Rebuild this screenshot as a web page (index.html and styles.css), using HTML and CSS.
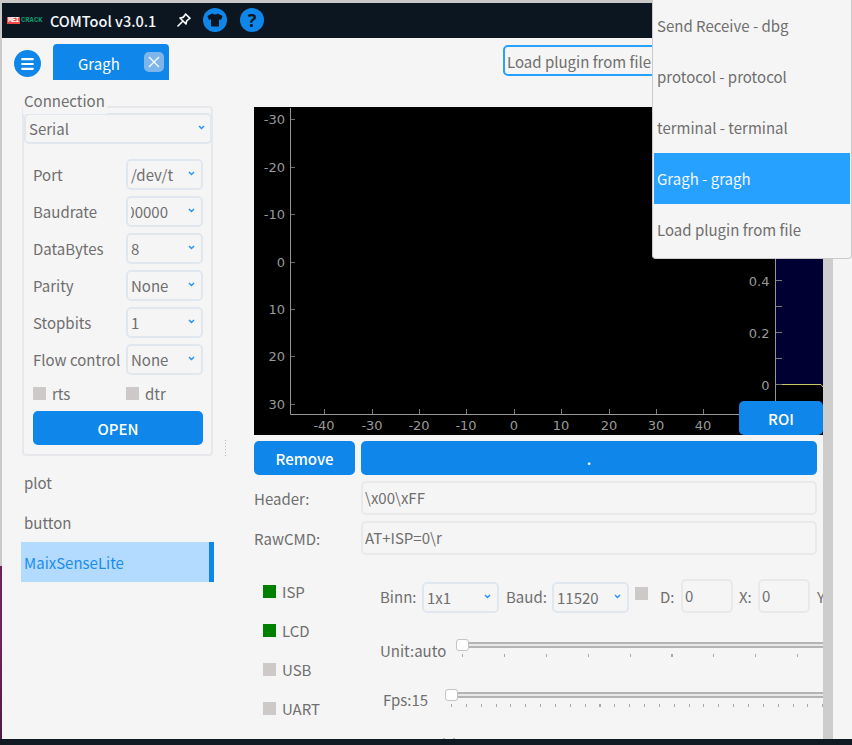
FILE: index.html
```html
<!DOCTYPE html>
<html lang="en">
<head>
<meta charset="utf-8">
<title>COMTool v3.0.1</title>
<link rel="stylesheet" href="styles.css">
</head>
<body>
<div class="desk">
  <div class="window">
    <header class="titlebar">
      <div class="logo"><span class="logo-red">MEI</span><span class="logo-green">CRACK</span></div>
      <div class="app-title">COMTool v3.0.1</div>
      <svg class="pin" width="14" height="14" viewBox="0 0 14 14"><path d="M8.6 1 L13 5.4 L11.4 6.4 L9.6 8 L9 11 L3 5 L6 4.4 L7.6 2.6 Z M5 9 L1 13" fill="none" stroke="#fff" stroke-width="1.6" stroke-linejoin="round" stroke-linecap="round"/></svg>
      <div class="round-icon shirt"><svg width="16" height="14" viewBox="0 0 16 14"><path d="M5.2 0.5 Q8 2.6 10.8 0.5 L15.6 3 L14 7 L12 6.2 L12 13.5 L4 13.5 L4 6.2 L2 7 L0.4 3 Z" fill="#0b1621"/></svg></div>
      <div class="round-icon help">?</div>
    </header>
    <div class="tabbar">
      <div class="menu-btn"><svg width="13" height="12" viewBox="0 0 13 12"><path d="M1.2 1.2H11.8M1.2 6H11.8M1.2 10.8H11.8" stroke="#fff" stroke-width="2.2" stroke-linecap="round"/></svg></div>
      <div class="tab">
        <span>Gragh</span>
        <div class="tab-close"><svg width="12" height="12" viewBox="0 0 12 12"><path d="M1 1L11 11M11 1L1 11" stroke="#fff" stroke-width="1.1"/></svg></div>
      </div>
      <div class="plugin-combo">Load plugin from file</div>
    </div>
    <div class="content">
      <aside class="sidebar">
        <section class="group">
          <div class="group-title">Connection</div>
          <div class="select select-wide"><span class="val">Serial</span><svg class="chev" width="7" height="5" viewBox="0 0 7 5"><path d="M1 1L3.5 3.5L6 1" fill="none" stroke="#1e90ff" stroke-width="1.4"/></svg></div>
          <div class="conn-form">
            <div class="conn-row"><span class="conn-label">Port</span><div class="select"><span class="val">/dev/t</span><svg class="chev" width="7" height="5" viewBox="0 0 7 5"><path d="M1 1L3.5 3.5L6 1" fill="none" stroke="#1e90ff" stroke-width="1.4"/></svg></div></div>
            <div class="conn-row"><span class="conn-label">Baudrate</span><div class="select"><span class="val val-end"><span>1000000</span></span><svg class="chev" width="7" height="5" viewBox="0 0 7 5"><path d="M1 1L3.5 3.5L6 1" fill="none" stroke="#1e90ff" stroke-width="1.4"/></svg></div></div>
            <div class="conn-row"><span class="conn-label">DataBytes</span><div class="select"><span class="val">8</span><svg class="chev" width="7" height="5" viewBox="0 0 7 5"><path d="M1 1L3.5 3.5L6 1" fill="none" stroke="#1e90ff" stroke-width="1.4"/></svg></div></div>
            <div class="conn-row"><span class="conn-label">Parity</span><div class="select"><span class="val">None</span><svg class="chev" width="7" height="5" viewBox="0 0 7 5"><path d="M1 1L3.5 3.5L6 1" fill="none" stroke="#1e90ff" stroke-width="1.4"/></svg></div></div>
            <div class="conn-row"><span class="conn-label">Stopbits</span><div class="select"><span class="val">1</span><svg class="chev" width="7" height="5" viewBox="0 0 7 5"><path d="M1 1L3.5 3.5L6 1" fill="none" stroke="#1e90ff" stroke-width="1.4"/></svg></div></div>
            <div class="conn-row"><span class="conn-label">Flow control</span><div class="select"><span class="val">None</span><svg class="chev" width="7" height="5" viewBox="0 0 7 5"><path d="M1 1L3.5 3.5L6 1" fill="none" stroke="#1e90ff" stroke-width="1.4"/></svg></div></div>
            <div class="check-row">
              <div class="check-item"><i class="box"></i><span>rts</span></div>
              <div class="check-item"><i class="box"></i><span>dtr</span></div>
            </div>
            <div class="btn btn-open">OPEN</div>
          </div>
        </section>
        <nav class="plugin-list">
          <div class="plugin-item">plot</div>
          <div class="plugin-item">button</div>
          <div class="plugin-item active">MaixSenseLite</div>
        </nav>
      </aside>
      <main class="main">
        <div class="chart">
          <svg class="chart-svg" width="569" height="328" viewBox="254 107 569 328">
            <rect x="254" y="107" width="569" height="328" fill="#000"/>
            <rect x="776" y="107" width="47" height="277" fill="#000033"/>
            <path d="M776 384.5H821L823 387" fill="none" stroke="#c8c864" stroke-width="1"/>
            <g stroke="#969696" stroke-width="1" fill="none">
              <path d="M290.5 108V414.5H739"/>
              <path d="M775.5 107V401"/>
              <path stroke="#6a6a6a" d="M291 119.5h4M291 167.5h4M291 214.5h4M291 262.5h4M291 309.5h4M291 356.5h4M291 404.5h4"/>
              <path stroke="#7a7a7a" d="M324.5 409v5M372.5 409v5M419.5 409v5M466.5 409v5M514.5 409v5M561.5 409v5M609.5 409v5M656.5 409v5M703.5 409v5"/>
              <path stroke="#7a7a7a" d="M776 280.5h6M776 306.5h6M776 332.5h6M776 358.5h6M776 384.5h6"/>
            </g>
            <g class="axis-text" text-anchor="end">
              <text x="285" y="124">-30</text><text x="285" y="172">-20</text><text x="285" y="219">-10</text><text x="285" y="267">0</text><text x="285" y="314">10</text><text x="285" y="361">20</text><text x="285" y="409">30</text>
              <text x="769.5" y="286">0.4</text><text x="769.5" y="338">0.2</text><text x="769.5" y="390">0</text>
            </g>
            <g class="axis-text" text-anchor="middle">
              <text x="324" y="430">-40</text><text x="372" y="430">-30</text><text x="419" y="430">-20</text><text x="466" y="430">-10</text><text x="514" y="430">0</text><text x="561" y="430">10</text><text x="609" y="430">20</text><text x="656" y="430">30</text><text x="703" y="430">40</text>
            </g>
          </svg>
          <div class="btn btn-roi">ROI</div>
        </div>
        <div class="action-row">
          <div class="btn btn-remove">Remove</div>
          <div class="btn btn-dot">.</div>
        </div>
        <div class="field-row"><span class="field-label">Header:</span><div class="input input-wide">\x00\xFF</div></div>
        <div class="field-row"><span class="field-label">RawCMD:</span><div class="input input-wide">AT+ISP=0\r</div></div>
        <div class="panel">
          <div class="status">
            <div class="status-row"><i class="box on"></i><span>ISP</span></div>
            <div class="status-row"><i class="box on"></i><span>LCD</span></div>
            <div class="status-row"><i class="box"></i><span>USB</span></div>
            <div class="status-row"><i class="box"></i><span>UART</span></div>
          </div>
          <div class="controls">
            <div class="ctrl-row">
              <span class="lbl lbl-binn">Binn:</span>
              <div class="select"><span class="val">1x1</span><svg class="chev" width="7" height="5" viewBox="0 0 7 5"><path d="M1 1L3.5 3.5L6 1" fill="none" stroke="#1e90ff" stroke-width="1.4"/></svg></div>
              <span class="lbl lbl-baud">Baud:</span>
              <div class="select"><span class="val">11520</span><svg class="chev" width="7" height="5" viewBox="0 0 7 5"><path d="M1 1L3.5 3.5L6 1" fill="none" stroke="#1e90ff" stroke-width="1.4"/></svg></div>
              <i class="box box-baud"></i>
              <span class="lbl lbl-d">D:</span>
              <div class="input input-small">0</div>
              <span class="lbl lbl-x">X:</span>
              <div class="input input-small">0</div>
              <span class="lbl lbl-y">Y:</span>
            </div>
            <div class="slider-row">
              <span class="slider-label">Unit:auto</span>
              <div class="slider"><i class="track"></i><i class="ticks ticks-unit"></i><i class="handle"></i></div>
            </div>
            <div class="slider-row">
              <span class="slider-label slider-label-fps">Fps:15</span>
              <div class="slider"><i class="track"></i><i class="ticks ticks-fps"></i><i class="handle"></i></div>
            </div>
          </div>
        </div>
      </main>
      <div class="scrollbar"></div>
      <i class="split-dots split-v"></i>
      <i class="split-dots split-h"></i>
    </div>
  </div>
  <footer class="taskbar"></footer>
</div>
<div class="popup">
  <div class="popup-item">Send Receive - dbg</div>
  <div class="popup-item">protocol - protocol</div>
  <div class="popup-item">terminal - terminal</div>
  <div class="popup-item selected">Gragh - gragh</div>
  <div class="popup-item">Load plugin from file</div>
</div>
</body>
</html>
```
FILE: styles.css
```css
* { box-sizing: border-box; }
html, body { margin: 0; padding: 0; }
body {
  position: relative;
  width: 852px;
  height: 745px;
  overflow: hidden;
  font-family: "Noto Sans CJK SC", "Noto Sans", sans-serif;
  font-size: 15px;
  color: #6f6f6f;
  background: #f5f5f5;
}
.desk {
  display: flex;
  flex-direction: column;
  height: 745px;
  padding: 3px 0 0 2px;
  background: linear-gradient(#c9c9c9 0, #c9c9c9 566px, #6e2358 566px, #702358 640px, #4e1c44 739px);
}
.window {
  flex: 1;
  min-height: 0;
  display: flex;
  flex-direction: column;
  background: #f5f5f5;
}
.taskbar { height: 6px; margin-left: -2px; background: #111a22; }

/* title bar */
.titlebar {
  height: 35px;
  display: flex;
  align-items: center;
  padding-left: 5px;
  background: #0b1621;
}
.logo {
  display: flex;
  align-items: center;
  width: 43px;
  height: 7px;
  font-family: "Liberation Mono", monospace;
  font-size: 7px;
  font-weight: 700;
  line-height: 7px;
}
.logo-red { width: 13px; background: #f0484a; color: #fff; text-align: center; letter-spacing: -0.5px; }
.logo-green { margin-left: 1px; color: #119a6b; letter-spacing: 0.1px; }
.app-title { width: 127px; color: #f4f7fa; font-size: 14.5px; font-weight: 500; line-height: 35px; white-space: nowrap; }
.pin { margin-right: 12px; margin-top: -1px; }
.round-icon {
  width: 24px;
  height: 24px;
  border-radius: 50%;
  background: #0f87ea;
  display: flex;
  align-items: center;
  justify-content: center;
  margin-top: -1px;
}
.help {
  margin-left: 13px;
  color: #0b1621;
  font-family: "Noto Sans", sans-serif;
  font-size: 18px;
  font-weight: 700;
  line-height: 24px;
}

/* tab bar */
.tabbar { height: 42px; display: flex; align-items: flex-start; padding: 6px 0 0 12px; }
.menu-btn {
  width: 27px;
  height: 27px;
  margin-top: 6px;
  border-radius: 50%;
  background: #0f87ea;
  display: flex;
  align-items: center;
  justify-content: center;
}
.tab {
  position: relative;
  width: 116px;
  height: 36px;
  margin-left: 12px;
  padding-left: 25px;
  border-radius: 4px 4px 0 0;
  background: #0f87ea;
  color: #fff;
  font-size: 15px;
  line-height: 40px;
}
.tab-close {
  position: absolute;
  top: 8px;
  right: 5px;
  width: 20px;
  height: 20px;
  border-radius: 5px;
  background: #7fb6ea;
  display: flex;
  align-items: center;
  justify-content: center;
}
.plugin-combo {
  width: 220px;
  height: 31px;
  margin: 1px 0 0 334px;
  padding-left: 2px;
  border: 2px solid #27a1ff;
  border-radius: 5px;
  line-height: 29px;
  white-space: nowrap;
}

/* content */
.content { position: relative; flex: 1; min-height: 0; display: flex; }
.sidebar { width: 193px; margin-left: 19px; padding-top: 26px; flex: none; }
.group {
  position: relative;
  height: 350px;
  margin: 0 1px;
  padding: 6px 0 0 1px;
  border: 2px solid #e6e8eb;
  border-radius: 4px;
}
.group-title {
  position: absolute;
  top: -17px;
  left: -1px;
  height: 23px;
  padding: 0 2px 0 1px;
  background: #f5f5f5;
  line-height: 20px;
}
.select {
  flex: none;
  width: 77px;
  height: 31px;
  margin: -1px;
  display: flex;
  align-items: center;
  padding: 0 6px 0 3px;
  border: 2px solid #e1e7ef;
  border-radius: 5px;
  background: #f5f5f5;
}
.select-wide { width: 188px; padding-left: 3px; padding-right: 5px; }
.val { flex: 1; min-width: 0; overflow: hidden; white-space: nowrap; line-height: 25px; }
.val-end { display: flex; justify-content: flex-end; margin-right: 20px; }
.chev { flex: none; margin-top: -2px; }
.conn-form { display: flex; flex-direction: column; gap: 8px; margin-top: 17px; padding-left: 8px; }
.conn-row { display: flex; align-items: center; height: 29px; }
.conn-label { width: 94px; white-space: nowrap; }
.check-row { display: flex; height: 14px; margin-top: 4px; }
.check-item { flex: none; width: 93px; display: flex; align-items: center; gap: 6px; }
.box { flex: none; display: block; width: 13px; height: 13px; background: #cdc9c9; }
.box.on { background: #008000; }
.btn {
  display: flex;
  align-items: center;
  justify-content: center;
  height: 34px;
  border-radius: 5px;
  background: #0f87ea;
  color: #fff;
  font-weight: 500;
}
.btn-open { width: 170px; margin-top: 3px; }
.plugin-list { margin-top: 6px; }
.plugin-item { height: 40px; padding-left: 3px; line-height: 42px; }
.plugin-item.active { background: #b3dbff; border-right: 5px solid #0f87ea; color: #1a8cf0; }

/* main */
.main { width: 569px; margin-left: 40px; padding-top: 27px; flex: none; overflow: hidden; }
.chart { position: relative; height: 328px; background: #000; }
.chart-svg { display: block; }
.axis-text text { fill: #999; font-family: "DejaVu Sans", sans-serif; font-size: 13px; }
.btn-roi { position: absolute; right: 0; bottom: 0; width: 84px; }
.action-row { display: flex; gap: 6px; margin-top: 6px; width: 563px; }
.btn-remove { width: 101px; }
.btn-dot { flex: 1; }
.field-row { display: flex; align-items: center; height: 34px; margin-top: 6px; width: 563px; }
.field-label { width: 107px; }
.input {
  height: 34px;
  padding-left: 2px;
  border: 2px solid #e9e9e9;
  border-radius: 5px;
  line-height: 30px;
}
.input-wide { flex: 1; }
.input-small { flex: none; width: 52px; padding-left: 2px; }

.panel { display: flex; }
.status { width: 126px; flex: none; padding: 17px 0 0 9px; }
.status-row { display: flex; align-items: center; gap: 6px; height: 39px; }
.controls { flex: 1; min-width: 0; overflow: hidden; padding-top: 24px; }
.ctrl-row { display: flex; align-items: center; height: 34px; white-space: nowrap; }
.ctrl-row .select { margin-top: 1px; margin-bottom: -1px; }
.lbl { flex: none; margin-top: 1px; }
.lbl-binn { width: 43px; }
.lbl-baud { width: 47px; margin-left: 8px; }
.box-baud { margin: -5px 0 0 7px; }
.lbl-d { width: 21px; margin-left: 12px; }
.lbl-x { width: 19px; margin-left: 6px; }
.lbl-y { margin-left: 7px; }
.slider-row { display: flex; height: 24px; margin-top: 26px; align-items: flex-start; }
.slider-label { flex: none; width: 76px; line-height: 24px; white-space: nowrap; }
.slider-label-fps { width: 65px; padding-left: 3px; line-height: 22px; }
.slider { position: relative; flex: 1; height: 18px; }
.track {
  position: absolute;
  top: 3px;
  left: 6px;
  right: 0;
  height: 6px;
  border-top: 2px solid #b4b4b4;
  border-bottom: 2px solid #b4b4b4;
  background: #e8e8e8;
}
.ticks { position: absolute; top: 15px; left: 6px; right: 0; height: 3px; }
.ticks-unit { background: repeating-linear-gradient(90deg, #aaa 0, #aaa 1px, transparent 1px, transparent 41.9px); }
.ticks-fps { background: repeating-linear-gradient(90deg, #aaa 0, #aaa 1px, transparent 1px, transparent 14.85px); }
.handle {
  position: absolute;
  top: 0;
  left: 0;
  width: 13px;
  height: 12px;
  border: 1px solid #c4c4c4;
  border-radius: 3px;
  background: #fff;
}
.scrollbar { width: 10px; flex: none; background: #cdcdcd; }
.split-dots { position: absolute; display: block; }
.split-v { left: 223px; top: 360px; width: 1px; height: 17px; background: repeating-linear-gradient(#bbb 0, #bbb 1px, transparent 1px, transparent 3px); }
.split-h { left: 441px; top: 658px; width: 12px; height: 1px; background: repeating-linear-gradient(90deg, #bbb 0, #bbb 2px, transparent 2px, transparent 10px); }

/* popup */
.popup {
  position: absolute;
  top: 0;
  right: 0;
  width: 200px;
  height: 259px;
  padding: 0 1px;
  border: 1px solid #cacaca;
  border-top: none;
  border-radius: 0 0 4px 4px;
  background: #f5f5f5;
}
.popup-item { height: 51px; padding-left: 3px; line-height: 52px; white-space: nowrap; }
.popup-item.selected { background: #27a1ff; color: #f2f8ff; }
```
